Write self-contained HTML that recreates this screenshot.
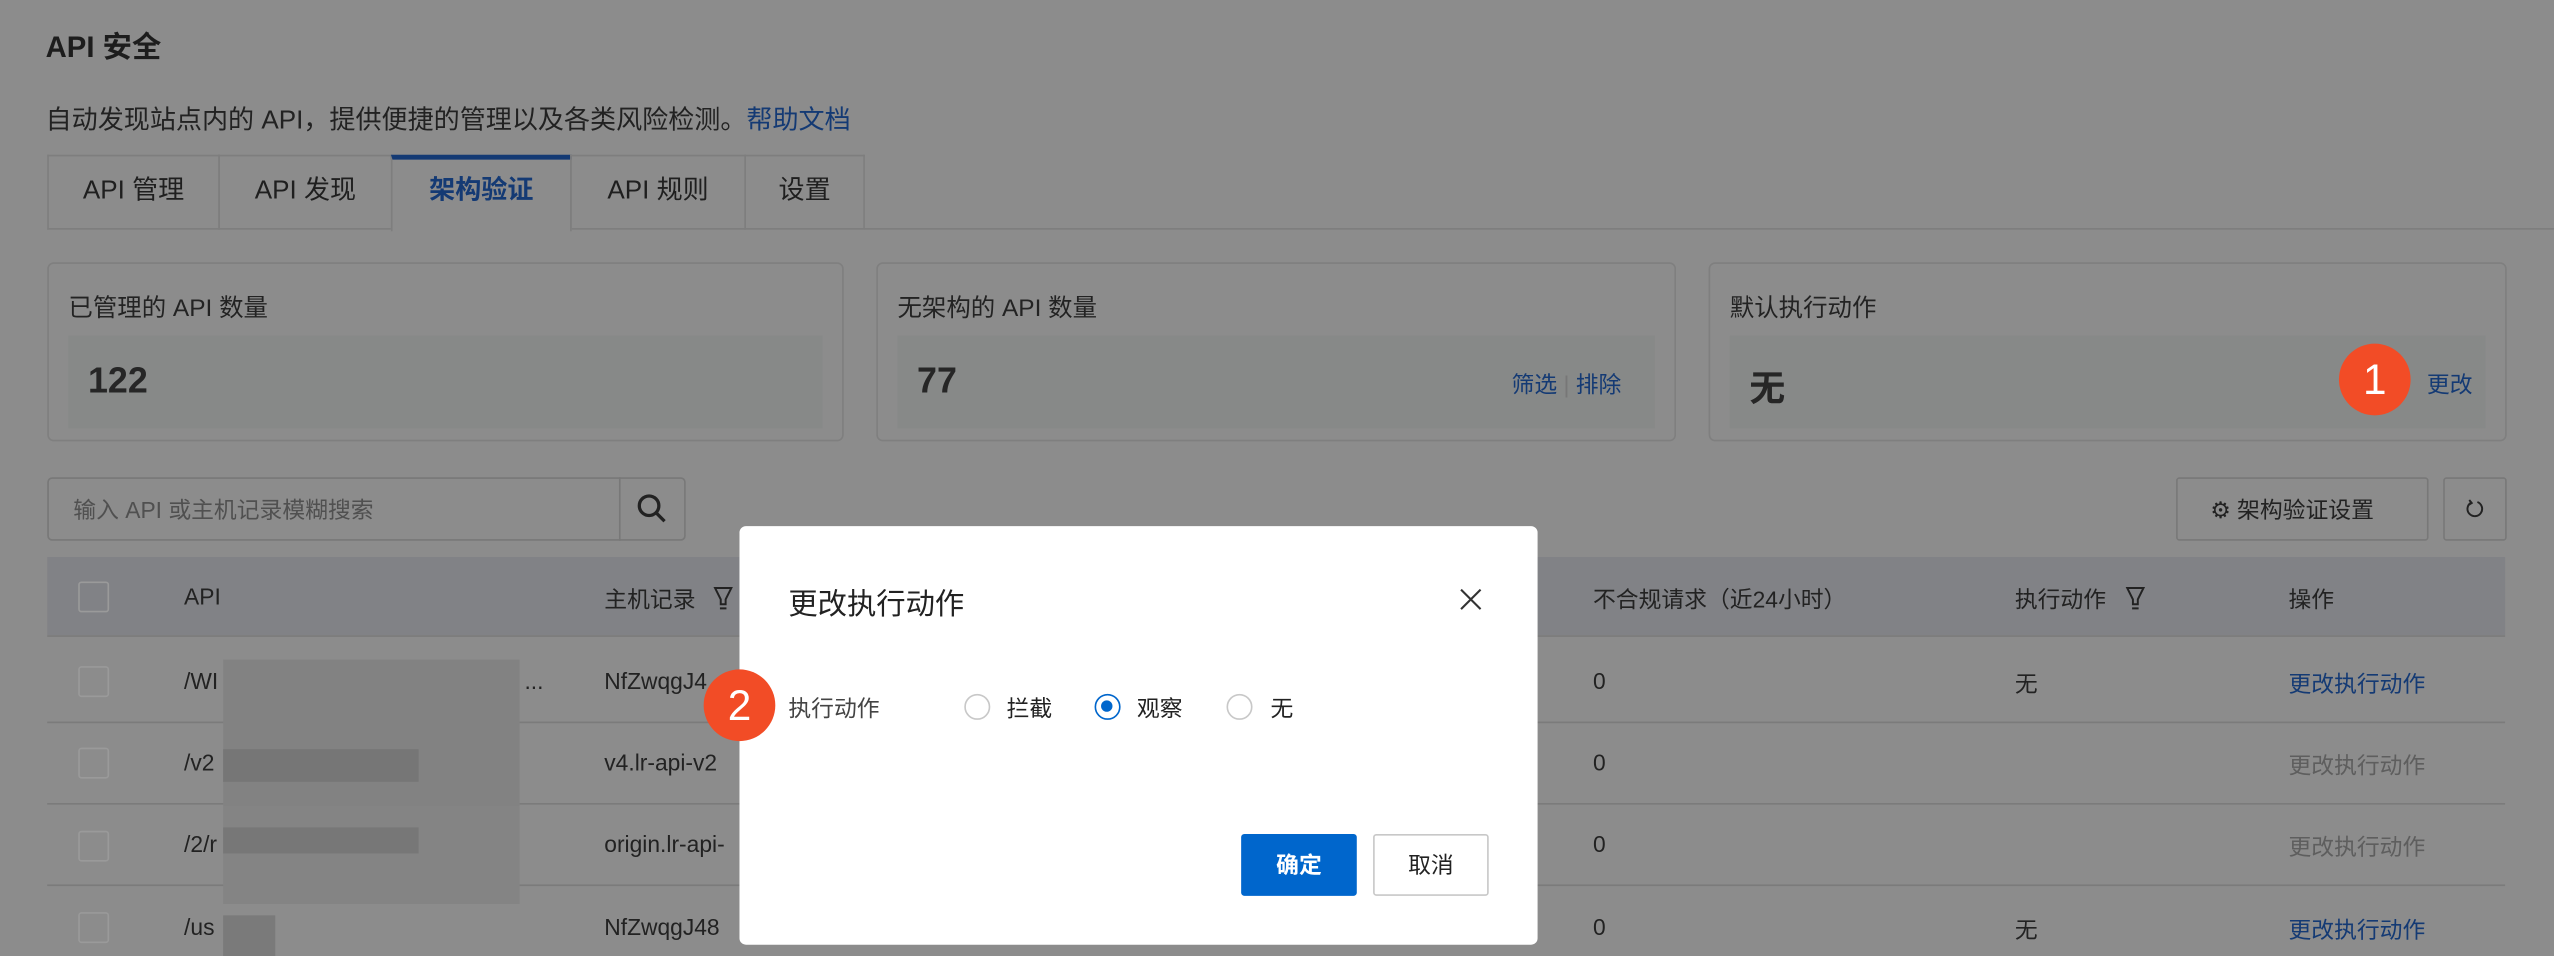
<!DOCTYPE html>
<html><head><meta charset="utf-8"><style>
html,body{margin:0;padding:0;width:2554px;height:956px;overflow:hidden;background:#8c8c8c;}
#s{position:absolute;left:0;top:0;width:1568px;height:587px;transform:scale(1.6288);transform-origin:0 0;font-family:"Liberation Sans","Noto Sans CJK SC",sans-serif;color:#1d1d1d;}
.a{position:absolute;white-space:nowrap;}
.card{position:absolute;top:161px;height:110px;border:1px solid #7f7f7f;border-radius:4px;box-sizing:border-box;}
.inner{position:absolute;left:12px;right:12px;top:44px;height:57px;background:#878988;}
.ct{position:absolute;left:12px;top:16px;font-size:15px;color:#232323;}
.cv{position:absolute;left:12px;top:15px;font-size:22px;color:#262626;font-weight:bold;}
.blue{color:#143a74;}
.tab{position:absolute;top:95px;height:46px;box-sizing:border-box;border:1px solid #7e7e7e;border-bottom:none;font-size:16px;line-height:44px;text-align:center;color:#1f1f1f;}
.cb{position:absolute;left:48px;width:19px;height:19px;border:1px solid #9a9a9a;border-radius:2px;box-sizing:border-box;}
.hl{position:absolute;left:29px;width:1509px;height:1px;background:#7b7b7b;}
.t{position:absolute;font-size:14px;color:#222;white-space:nowrap;}
.badge{position:absolute;width:44px;height:44px;border-radius:50%;background:#f24c26;color:#fff;font-size:26px;line-height:44px;text-align:center;}
.radio{position:absolute;width:16px;height:16px;border:1px solid #c8c8c8;border-radius:50%;box-sizing:border-box;top:426px;}
</style></head><body><div id="s">
<div class="a" style="left:28px;top:15px;font-size:18px;font-weight:bold;">API 安全</div>
<div class="a" style="left:28px;top:60px;font-size:16px;color:#222;">自动发现站点内的 API，提供便捷的管理以及各类风险检测。<span class="blue">帮助文档</span></div>
<div class="a" style="left:29px;top:140px;width:1539px;height:1px;background:#7e7e7e"></div>
<div class="tab" style="left:29px;width:106px;">API 管理</div>
<div class="tab" style="left:134px;width:107px;">API 发现</div>
<div class="tab" style="left:240px;width:111px;background:#8c8c8c;height:47px;border-top:3px solid #143a74;line-height:40px;color:#143a74;font-weight:bold;">架构验证</div>
<div class="tab" style="left:350px;width:108px;">API 规则</div>
<div class="tab" style="left:457px;width:74px;">设置</div>

<div class="card" style="left:29px;width:489px;"><div class="ct">已管理的 API 数量</div><div class="inner"><div class="cv">122</div></div></div>
<div class="card" style="left:538px;width:491px;"><div class="ct">无架构的 API 数量</div><div class="inner"><div class="cv">77</div><div class="a blue" style="left:377px;top:20px;font-size:14px;">筛选 <span style="color:#777">|</span> 排除</div></div></div>
<div class="card" style="left:1049px;width:490px;"><div class="ct">默认执行动作</div><div class="inner"><div class="cv">无</div><div class="a blue" style="left:428px;top:20px;font-size:14px;">更改</div></div></div>
<div class="badge" style="left:1436px;top:211px;">1</div>

<div class="a" style="left:29px;top:293px;width:392px;height:39px;border:1px solid #787878;border-radius:3px;box-sizing:border-box;"></div>
<div class="a" style="left:380px;top:293px;width:1px;height:39px;background:#787878"></div>
<div class="t" style="left:45px;top:303px;color:#505050;">输入 API 或主机记录模糊搜索</div>
<svg class="a" style="left:390px;top:302px" width="20" height="20" viewBox="0 0 20 20"><circle cx="8.5" cy="8.5" r="6" fill="none" stroke="#222" stroke-width="2"/><path d="M13 13l5 5" stroke="#222" stroke-width="2"/></svg>
<div class="a" style="left:1336px;top:293px;width:155px;height:39px;border:1px solid #787878;border-radius:2px;box-sizing:border-box;"></div>
<div class="t" style="left:1357px;top:303px;font-size:14px;">⚙ 架构验证设置</div>
<div class="a" style="left:1500px;top:293px;width:39px;height:39px;border:1px solid #787878;border-radius:2px;box-sizing:border-box;"></div>
<svg class="a" style="left:1513px;top:306px" width="13" height="13" viewBox="0 0 13 13"><path d="M8 2.2A4.5 4.5 0 1 1 4 2.6" fill="none" stroke="#222" stroke-width="1.2"/><path d="M3 1l1.5 1.8L2.6 4" fill="none" stroke="#222" stroke-width="1.2"/></svg>

<div class="a" style="left:29px;top:342px;width:1509px;height:48px;background:#818286"></div>
<div class="hl" style="top:390px"></div><div class="hl" style="top:443px"></div><div class="hl" style="top:493px"></div><div class="hl" style="top:543px"></div>
<div class="cb" style="top:357px"></div><div class="cb" style="top:409px"></div><div class="cb" style="top:459px"></div><div class="cb" style="top:510px"></div><div class="cb" style="top:560px"></div>
<div class="t" style="left:113px;top:358px;">API</div>
<div class="t" style="left:371px;top:358px;">主机记录</div>
<svg class="a" style="left:438px;top:360px" width="12" height="15" viewBox="0 0 12 15"><path d="M1 1h10L7.5 8v3h-3V8z" fill="none" stroke="#222" stroke-width="1.2"/><path d="M4 13.5h4" stroke="#222" stroke-width="1.2"/></svg>
<div class="t" style="left:978px;top:358px;">不合规请求（近24小时）</div>
<div class="t" style="left:1237px;top:358px;">执行动作</div>
<svg class="a" style="left:1305px;top:360px" width="12" height="15" viewBox="0 0 12 15"><path d="M1 1h10L7.5 8v3h-3V8z" fill="none" stroke="#222" stroke-width="1.2"/><path d="M4 13.5h4" stroke="#222" stroke-width="1.2"/></svg>
<div class="t" style="left:1405px;top:358px;">操作</div>
<div class="t" style="left:113px;top:410px;">/WI</div><div class="t" style="left:322px;top:410px;">...</div>
<div class="t" style="left:113px;top:460px;">/v2</div>
<div class="t" style="left:113px;top:510px;">/2/r</div>
<div class="t" style="left:113px;top:561px;">/us</div>
<div class="a" style="left:137px;top:405px;width:182px;height:90px;background:#828282"></div>
<div class="a" style="left:137px;top:460px;width:120px;height:20px;background:#767676"></div>
<div class="a" style="left:137px;top:495px;width:182px;height:60px;background:#848484"></div>
<div class="a" style="left:137px;top:508px;width:120px;height:16px;background:#777"></div>
<div class="a" style="left:137px;top:562px;width:32px;height:25px;background:#7a7a7a"></div>
<div class="t" style="left:371px;top:410px;">NfZwqgJ4</div><div class="t" style="left:371px;top:460px;">v4.lr-api-v2</div><div class="t" style="left:371px;top:510px;">origin.lr-api-</div><div class="t" style="left:371px;top:561px;">NfZwqgJ48</div>
<div class="t" style="left:978px;top:410px;">0</div><div class="t" style="left:978px;top:460px;">0</div><div class="t" style="left:978px;top:510px;">0</div><div class="t" style="left:978px;top:561px;">0</div>
<div class="t" style="left:1237px;top:410px;">无</div><div class="t" style="left:1237px;top:561px;">无</div>
<div class="t" style="left:1405px;top:410px;color:#143a74">更改执行动作</div>
<div class="t" style="left:1405px;top:460px;color:#5e5e5e">更改执行动作</div>
<div class="t" style="left:1405px;top:510px;color:#5e5e5e">更改执行动作</div>
<div class="t" style="left:1405px;top:561px;color:#143a74">更改执行动作</div>

<div class="a" style="left:454px;top:323px;width:490px;height:257px;background:#fff;border-radius:4px;"></div>
<div class="a" style="left:484px;top:357px;font-size:18px;color:#222;">更改执行动作</div>
<svg class="a" style="left:896px;top:361px" width="14" height="14" viewBox="0 0 14 14"><path d="M1 1l12 12M13 1L1 13" stroke="#333" stroke-width="1.3"/></svg>
<div class="t" style="left:484px;top:425px;color:#444;">执行动作</div>
<div class="radio" style="left:592px"></div><div class="t" style="left:618px;top:425px;">拦截</div>
<div class="radio" style="left:672px;border:1.5px solid #0066cc;"><div style="position:absolute;left:3px;top:3px;width:7px;height:7px;border-radius:50%;background:#0066cc"></div></div><div class="t" style="left:698px;top:425px;">观察</div>
<div class="radio" style="left:753px"></div><div class="t" style="left:780px;top:425px;">无</div>
<div class="a" style="left:762px;top:512px;width:71px;height:38px;background:#0066cc;border-radius:2px;color:#fff;font-size:14px;line-height:38px;text-align:center;font-weight:bold;">确定</div>
<div class="a" style="left:843px;top:512px;width:71px;height:38px;border:1px solid #c8c8c8;border-radius:2px;box-sizing:border-box;font-size:14px;line-height:36px;text-align:center;color:#222;">取消</div>
<div class="badge" style="left:432px;top:411px;">2</div>
</div></body></html>
